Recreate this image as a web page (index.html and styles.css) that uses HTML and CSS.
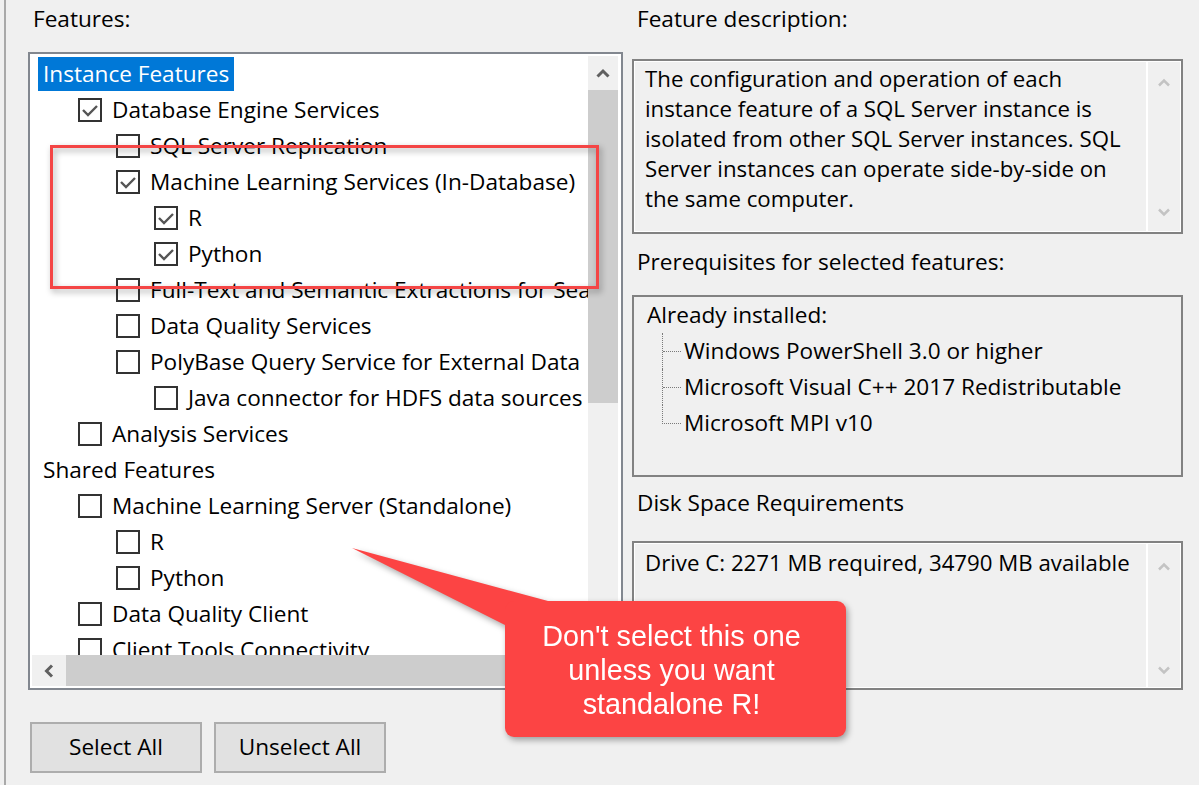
FILE: index.html
```html
<!DOCTYPE html>
<html lang="en">
<head>
<meta charset="utf-8">
<title>Feature Selection</title>
<link rel="stylesheet" href="styles.css">
</head>
<body>
<div class="dialog">
  <section class="col-left">
    <div class="group-label lbl-features">Features:</div>
    <div class="tree">
      <div class="tree-view">
        <ul class="tree-list">
          <li class="row cat"><span class="cat-label selected">Instance Features</span></li>
          <li class="row l1"><span class="cb on"><svg viewBox="0 0 20 20"><polyline points="3,10 8,15 17,6"/></svg></span><span class="txt">Database Engine Services</span></li>
          <li class="row l2"><span class="cb"></span><span class="txt">SQL Server Replication</span></li>
          <li class="row l2"><span class="cb on"><svg viewBox="0 0 20 20"><polyline points="3,10 8,15 17,6"/></svg></span><span class="txt">Machine Learning Services (In-Database)</span></li>
          <li class="row l3"><span class="cb on"><svg viewBox="0 0 20 20"><polyline points="3,10 8,15 17,6"/></svg></span><span class="txt">R</span></li>
          <li class="row l3"><span class="cb on"><svg viewBox="0 0 20 20"><polyline points="3,10 8,15 17,6"/></svg></span><span class="txt">Python</span></li>
          <li class="row l2"><span class="cb"></span><span class="txt">Full-Text and Semantic Extractions for Search</span></li>
          <li class="row l2"><span class="cb"></span><span class="txt">Data Quality Services</span></li>
          <li class="row l2"><span class="cb"></span><span class="txt">PolyBase Query Service for External Data</span></li>
          <li class="row l3"><span class="cb"></span><span class="txt">Java connector for HDFS data sources</span></li>
          <li class="row l1"><span class="cb"></span><span class="txt">Analysis Services</span></li>
          <li class="row cat"><span class="cat-label">Shared Features</span></li>
          <li class="row l1"><span class="cb"></span><span class="txt">Machine Learning Server (Standalone)</span></li>
          <li class="row l2"><span class="cb"></span><span class="txt">R</span></li>
          <li class="row l2"><span class="cb"></span><span class="txt">Python</span></li>
          <li class="row l1"><span class="cb"></span><span class="txt">Data Quality Client</span></li>
          <li class="row l1"><span class="cb"></span><span class="txt">Client Tools Connectivity</span></li>
        </ul>
      </div>
      <div class="vscroll">
        <div class="sb-btn"><svg class="chev" width="14" height="10" viewBox="0 0 14 10"><polyline points="1.5,8.5 7,3 12.5,8.5"/></svg></div>
        <div class="thumb-v"></div>
      </div>
      <div class="hscroll">
        <div class="sb-btn"><svg class="chev" width="10" height="14" viewBox="0 0 10 14"><polyline points="8,1.5 2.5,7 8,12.5"/></svg></div>
        <div class="thumb-h"></div>
      </div>
      <div class="sb-corner"></div>
    </div>
    <div class="buttons">
      <button class="btn">Select All</button>
      <button class="btn">Unselect All</button>
    </div>
  </section>

  <section class="col-right">
    <div class="group-label lbl-desc">Feature description:</div>
    <div class="textbox desc-box">
      <p class="tb-text">The configuration and operation of each<br>instance feature of a SQL Server instance is<br>isolated from other SQL Server instances. SQL<br>Server instances can operate side-by-side on<br>the same computer.</p>
      <div class="tb-scroll">
        <svg class="chev-light" width="14" height="9" viewBox="0 0 14 9"><polyline points="2,7.5 7,2.5 12,7.5"/></svg>
        <svg class="chev-light" width="14" height="9" viewBox="0 0 14 9"><polyline points="2,1.5 7,6.5 12,1.5"/></svg>
      </div>
    </div>

    <div class="group-label lbl-prereq">Prerequisites for selected features:</div>
    <div class="prereq-box">
      <div class="pr-head">Already installed:</div>
      <ul class="pr-tree">
        <li>Windows PowerShell 3.0 or higher</li>
        <li>Microsoft Visual C++ 2017 Redistributable</li>
        <li>Microsoft MPI v10</li>
      </ul>
    </div>

    <div class="group-label lbl-disk">Disk Space Requirements</div>
    <div class="textbox disk-box">
      <p class="tb-text disk-text">Drive C: 2271 MB required, 34790 MB available</p>
      <div class="tb-scroll disk-scroll">
        <svg class="chev-light" width="14" height="9" viewBox="0 0 14 9"><polyline points="2,7.5 7,2.5 12,7.5"/></svg>
        <svg class="chev-light" width="14" height="9" viewBox="0 0 14 9"><polyline points="2,1.5 7,6.5 12,1.5"/></svg>
      </div>
    </div>
  </section>
</div>

<div class="highlight-box"></div>

<div class="callout">
  <div class="callout-tail"></div>
  <div class="callout-body">Don't select this one<br>unless you want<br>standalone R!</div>
</div>
</body>
</html>
```

FILE: styles.css
```css
* { box-sizing: border-box; }

html, body {
  margin: 0;
  padding: 0;
}

body {
  width: 1199px;
  height: 785px;
  overflow: hidden;
  background: #f0f0f0;
  font-family: "Open Sans", "Noto Sans", sans-serif;
  font-size: 22.6px;
  color: #000;
  position: relative;
}

.dialog {
  display: flex;
  height: 785px;
  margin-left: 4px;
  border-left: 2px solid #a9a9a9;
  padding-left: 22px;
  gap: 9px;
}

.group-label {
  line-height: 37px;
  height: 38px;
  white-space: nowrap;
}

/* ---------- left column ---------- */
.col-left {
  width: 595px;
  display: flex;
  flex-direction: column;
}

.lbl-features {
  padding-left: 5px;
  margin-bottom: 14px;
}

.tree {
  height: 638px;
  border: 2px solid #82878f;
  background: #fff;
  padding: 2px 3px 2px 2px;
  display: grid;
  grid-template-columns: 556px 30px;
  grid-template-rows: 599px 31px;
}

.tree-view {
  overflow: hidden;
}

.tree-list {
  list-style: none;
  margin: 0;
  padding: 0;
}

.row {
  height: 36px;
  line-height: 34px;
  display: flex;
  align-items: center;
  white-space: nowrap;
}

.row.cat { padding-left: 6px; }
.row.l1 { padding-left: 46px; }
.row.l2 { padding-left: 84px; }
.row.l3 { padding-left: 122px; }

.cat-label {
  height: 34px;
  line-height: 33px;
  padding: 0 5px;
}

.cat-label.selected {
  background: #0078d7;
  color: #fff;
}

.cb {
  flex: none;
  width: 24px;
  height: 24px;
  border: 2px solid #333;
  background: #fff;
  display: flex;
}

.cb svg {
  width: 20px;
  height: 20px;
  fill: none;
  stroke: #555;
  stroke-width: 2.4;
}

.txt {
  margin-left: 10px;
}

.vscroll {
  background: #f0f0f0;
  display: flex;
  flex-direction: column;
}

.vscroll .sb-btn {
  height: 34px;
}

.thumb-v {
  height: 313px;
  background: #cdcdcd;
}

.hscroll {
  background: #f0f0f0;
  display: flex;
}

.hscroll .sb-btn {
  width: 34px;
}

.thumb-h {
  width: 490px;
  background: #cdcdcd;
}

.sb-corner {
  background: #f0f0f0;
}

.sb-btn {
  display: flex;
  align-items: center;
  justify-content: center;
}

.chev {
  fill: none;
  stroke: #606060;
  stroke-width: 3;
}

.buttons {
  margin-top: 32px;
  padding-left: 2px;
  display: flex;
  gap: 12px;
}

.btn {
  width: 172px;
  height: 51px;
  border: 2px solid #adadad;
  background: #e1e1e1;
  font-family: inherit;
  font-size: 22.6px;
  color: #000;
  padding: 0 0 2px;
}

/* ---------- right column ---------- */
.col-right {
  width: 551px;
  display: flex;
  flex-direction: column;
}

.lbl-desc {
  padding-left: 5px;
  margin-bottom: 21px;
}

.lbl-prereq {
  padding-left: 5px;
  margin-top: 9px;
  margin-bottom: 14px;
}

.lbl-disk {
  padding-left: 5px;
  margin-top: 7px;
  margin-bottom: 19px;
}

.textbox {
  border: 2px solid #828282;
  box-shadow: inset 0 0 0 1px #fff;
  background: #f0f0f0;
  display: flex;
  padding: 1px;
}

.desc-box { height: 175px; }
.disk-box { height: 149px; }

.tb-text {
  flex: 1;
  margin: 0;
  padding: 2px 0 0 10px;
  font-size: 22.25px;
  line-height: 30px;
  white-space: nowrap;
}

.disk-text {
  padding-top: 4px;
}

.tb-scroll {
  width: 34px;
  border-left: 2px solid #fff;
  display: flex;
  flex-direction: column;
  align-items: center;
  justify-content: space-between;
  padding: 16px 0 14px;
}

.disk-scroll {
  padding: 18px 0 12px;
}

.chev-light {
  fill: none;
  stroke: #c3c3c3;
  stroke-width: 2.5;
}

.prereq-box {
  height: 182px;
  border: 2px solid #828282;
  background: #f0f0f0;
  padding: 0 0 0 13px;
}

.pr-head {
  height: 36px;
  line-height: 36px;
  white-space: nowrap;
}

.pr-tree {
  list-style: none;
  margin: 0 0 0 15px;
  padding: 0;
}

.pr-tree li {
  height: 36px;
  line-height: 34px;
  display: flex;
  align-items: center;
  white-space: nowrap;
  border-left: 1px dotted #7a7a7a;
}

.pr-tree li::before {
  content: "";
  align-self: flex-start;
  width: 18px;
  height: 18px;
  border-bottom: 1px dotted #7a7a7a;
  margin-right: 3px;
}

.pr-tree li:last-child {
  border-left-color: transparent;
}

.pr-tree li:last-child::before {
  border-left: 1px dotted #7a7a7a;
  margin-left: -1px;
}

/* ---------- overlays ---------- */
.highlight-box {
  position: absolute;
  left: 50px;
  top: 145px;
  width: 549px;
  height: 144px;
  border: 3px solid #f44545;
  filter: drop-shadow(2px 3px 3px rgba(0, 0, 0, 0.35));
}

.callout {
  position: absolute;
  left: 352px;
  top: 548px;
  width: 494px;
  height: 189px;
  filter: drop-shadow(2px 3px 3px rgba(0, 0, 0, 0.35));
}

.callout-tail {
  position: absolute;
  left: 0;
  top: 0;
  width: 200px;
  height: 80px;
  background: #fc4444;
  clip-path: polygon(0 0, 196px 53px, 153px 77px);
}

.callout-body {
  position: absolute;
  left: 153px;
  top: 53px;
  width: 341px;
  height: 136px;
  background: #fc4444;
  border-radius: 9px;
  padding-top: 18px;
  padding-right: 8px;
  text-align: center;
  color: #fff;
  font-family: "Liberation Sans", Arial, sans-serif;
  font-size: 28.8px;
  line-height: 34px;
}
```
